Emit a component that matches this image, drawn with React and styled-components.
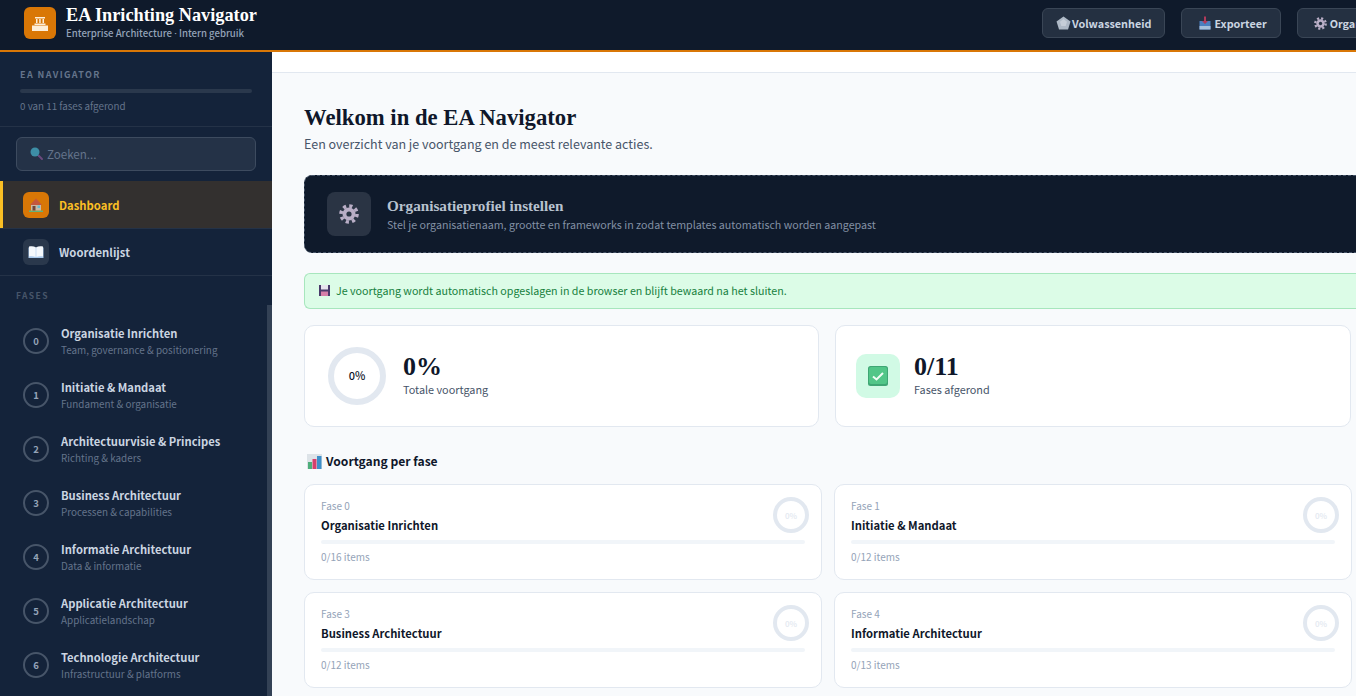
import React from 'react';
import styled, { createGlobalStyle } from 'styled-components';

const GlobalStyle = createGlobalStyle`
  html, body {
    margin: 0;
    height: 100%;
    overflow: hidden;
    background: #f8fafc;
  }
  * {
    box-sizing: border-box;
  }
`;

const SANS = `"Noto Sans CJK SC", "Noto Sans", sans-serif`;
const SERIF = `"Liberation Serif", "DejaVu Serif", serif`;

const Page = styled.div`
  width: 1356px;
  height: 696px;
  overflow: hidden;
  display: flex;
  flex-direction: column;
  font-family: ${SANS};
`;

const Header = styled.header`
  flex: none;
  height: 52px;
  display: flex;
  align-items: center;
  padding: 0 0 4px 24px;
  background: #0f1a2b;
  border-bottom: 2px solid #d97706;
`;

const LogoBox = styled.div`
  width: 32px;
  height: 32px;
  border-radius: 6px;
  background: #d97706;
  display: flex;
  align-items: center;
  justify-content: center;
`;

const Brand = styled.div`
  margin-left: 10px;
  display: flex;
  flex-direction: column;
`;

const BrandTitle = styled.div`
  font-family: ${SERIF};
  font-weight: 700;
  font-size: 18.300px;
  line-height: 20px;
  color: #fff;
`;

const BrandSub = styled.div`
  margin-top: 1px;
  font-size: 9.600px;
  line-height: 14px;
  font-weight: 500;
  color: #94a3b8;
`;

const BrandDot = styled.span`
  font-family: "Noto Sans", sans-serif;
`;

const HeaderActions = styled.div`
  margin-left: auto;
  display: flex;
  gap: 16px;
  margin-right: -49px;
`;

const HeaderButton = styled.button`
  height: 30px;
  padding: 0 13px;
  display: flex;
  align-items: center;
  font-family: ${SANS};
  font-size: 10.800px;
  font-weight: 600;
  color: #cbd5e1;
  background: #243041;
  border: 1px solid #3a4656;
  border-radius: 6px;
`;

const ButtonIcon = styled.span`
  width: ${({ $wide }) => ($wide ? '19px' : '16px')};
  display: flex;
  justify-content: center;
`;

const Body = styled.div`
  flex: 1;
  min-height: 0;
  display: flex;
`;

const Sidebar = styled.aside`
  position: relative;
  flex: none;
  width: 272px;
  background: #14233a;
  display: flex;
  flex-direction: column;
  overflow: hidden;
`;

const ScrollThumb = styled.div`
  position: absolute;
  right: 0;
  top: 253px;
  bottom: 0;
  width: 5px;
  background: #334155;
`;

const SideTop = styled.div`
  padding: 16px 20px 12px;
  border-bottom: 1px solid #243247;
`;

const SideLabel = styled.div`
  font-size: 9px;
  line-height: 13px;
  font-weight: 700;
  letter-spacing: 1.400px;
  color: #64748b;
`;

const SideTrack = styled.div`
  height: 4px;
  margin-top: 8px;
  border-radius: 2px;
  background: #2a384c;
`;

const SideProgress = styled.div`
  margin-top: 6px;
  font-size: 9.800px;
  line-height: 15px;
  color: #64748b;
`;

const SearchWrap = styled.div`
  padding: 10px 16px;
`;

const SearchBox = styled.div`
  height: 34px;
  padding: 0 12px 1px;
  display: flex;
  align-items: center;
  gap: 3px;
  background: #243247;
  border: 1px solid #3d4b5f;
  border-radius: 6px;
  font-size: 11.600px;
  color: #64748b;
`;

const NavItem = styled.div`
  height: ${({ $active }) => ($active ? '48px' : '47px')};
  padding-left: 23px;
  display: flex;
  align-items: center;
  gap: 10px;
  font-size: 11.300px;
  font-weight: 600;
  color: ${({ $active }) => ($active ? '#fbbf24' : '#cbd5e1')};
  background: ${({ $active }) => ($active ? '#33302f' : 'transparent')};
  border-bottom: 1px solid #243247;
  box-shadow: ${({ $active }) => ($active ? 'inset 3px 0 0 #fbbf24' : 'none')};
`;

const NavIcon = styled.div`
  width: 26px;
  height: 26px;
  border-radius: 6px;
  display: flex;
  align-items: center;
  justify-content: center;
  background: ${({ $active }) => ($active ? '#d97706' : '#2a384c')};
`;

const PhaseLabel = styled.div`
  padding: 13px 16px 13px;
  font-size: 8.500px;
  line-height: 12px;
  font-weight: 700;
  letter-spacing: 1.400px;
  color: #475569;
`;

const PhaseRow = styled.div`
  height: 54px;
  padding-left: 23px;
  display: flex;
  align-items: center;
  gap: 12px;
`;

const PhaseDot = styled.div`
  flex: none;
  width: 26px;
  height: 26px;
  border-radius: 50%;
  border: 2px solid #475569;
  display: flex;
  align-items: center;
  justify-content: center;
  font-size: 9.500px;
  font-weight: 600;
  color: #94a3b8;
`;

const PhaseText = styled.div`
  display: flex;
  flex-direction: column;
  margin-top: -1px;
`;

const PhaseName = styled.div`
  font-size: 11.200px;
  line-height: 18px;
  font-weight: 600;
  color: #cbd5e1;
`;

const PhaseSub = styled.div`
  font-size: 9.900px;
  line-height: 16px;
  color: #64748b;
`;

const Main = styled.main`
  flex: 1;
  min-width: 0;
  display: flex;
  flex-direction: column;
  background: #f8fafc;
`;

const TopStrip = styled.div`
  flex: none;
  height: 21px;
  background: #fff;
  border-bottom: 1px solid #e2e8f0;
`;

const Content = styled.div`
  padding: 29px 4px 0 32px;
`;

const Title = styled.h1`
  margin: 0;
  font-family: ${SERIF};
  font-size: 22.700px;
  line-height: 32px;
  font-weight: 700;
  color: #0f172a;
`;

const Lead = styled.p`
  margin: 0;
  font-size: 12.500px;
  line-height: 20px;
  color: #475569;
`;

const ProfileBanner = styled.div`
  height: 78px;
  margin: 21px -4px 0 0;
  padding: 0 22px;
  display: flex;
  align-items: center;
  gap: 16px;
  background: #0f1a2b;
  border: 1px dashed #475569;
  border-right: 0;
  border-radius: 8px 0 0 8px;
`;

const ProfileIcon = styled.div`
  width: 44px;
  height: 44px;
  border-radius: 8px;
  background: #2a3444;
  display: flex;
  align-items: center;
  justify-content: center;
`;

const ProfileTitle = styled.div`
  margin-bottom: 2px;
  font-family: ${SERIF};
  font-size: 15.200px;
  line-height: 19px;
  font-weight: 700;
  color: #b8c2cf;
`;

const ProfileSub = styled.div`
  font-size: 10.700px;
  line-height: 16px;
  color: #8391a5;
`;

const SaveNotice = styled.div`
  height: 36px;
  margin: 20px -4px 0 0;
  padding: 0 13px 2px;
  display: flex;
  align-items: center;
  gap: 5px;
  font-size: 10.700px;
  color: #16803d;
  background: #dcfce7;
  border: 1px solid #a7e6bd;
  border-right: 0;
  border-radius: 6px 0 0 6px;
`;

const StatGrid = styled.div`
  margin-top: 16px;
  display: grid;
  grid-template-columns: 515px 516px;
  gap: 16px;
`;

const StatCard = styled.div`
  height: 102px;
  padding: 0 23px;
  display: flex;
  align-items: center;
  gap: 17px;
  background: #fff;
  border: 1px solid #e2e8f0;
  border-radius: 10px;
`;

const StatRing = styled.div`
  width: 58px;
  height: 58px;
  padding-bottom: 2px;
  border-radius: 50%;
  border: 6px solid #e2e8f0;
  display: flex;
  align-items: center;
  justify-content: center;
  font-size: 11px;
  font-weight: 500;
  color: #0f172a;
`;

const StatIcon = styled.div`
  width: 44px;
  height: 44px;
  margin: 0 -3px;
  border-radius: 10px;
  background: #d1fae5;
  display: flex;
  align-items: center;
  justify-content: center;
`;

const StatText = styled.div`
  display: flex;
  flex-direction: column;
  margin-top: -2px;
`;

const StatValue = styled.div`
  font-family: ${SERIF};
  font-size: 26px;
  line-height: 28px;
  font-weight: 700;
  color: #0f172a;
`;

const StatLabel = styled.div`
  font-size: 10.850px;
  line-height: 16px;
  color: #475569;
`;

const SectionTitle = styled.h2`
  margin: 24px 0 0 3px;
  display: flex;
  align-items: center;
  gap: 4px;
  font-size: 12.100px;
  line-height: 20px;
  font-weight: 600;
  color: #0f172a;
`;

const PhaseGrid = styled.div`
  margin-top: 13px;
  display: grid;
  grid-template-columns: 1fr 1fr;
  gap: 12px;
`;

const PhaseCard = styled.div`
  position: relative;
  height: 96px;
  padding: 14px 16px 0;
  background: #fff;
  border: 1px solid #e2e8f0;
  border-radius: 10px;
`;

const CardFase = styled.div`
  font-size: 10px;
  line-height: 14px;
  color: #94a3b8;
`;

const CardName = styled.div`
  margin-top: 4px;
  font-size: 11.250px;
  line-height: 17px;
  font-weight: 600;
  color: #0f172a;
`;

const CardTrack = styled.div`
  height: 4px;
  margin-top: 6px;
  border-radius: 2px;
  background: #f1f5f9;
`;

const CardCount = styled.div`
  margin-top: 6px;
  font-size: 10px;
  line-height: 14px;
  color: #94a3b8;
`;

const CardRing = styled.div`
  position: absolute;
  top: 12px;
  right: 12px;
  width: 36px;
  height: 36px;
  border-radius: 50%;
  border: 4px solid #e2e8f0;
  display: flex;
  align-items: center;
  justify-content: center;
  font-size: 8px;
  font-weight: 500;
  color: #e2e8f0;
`;

const TempleIcon = () => (
  <svg width="18" height="15" viewBox="0 0 18 15" fill="#fdeed8">
    <path d="M1 9.500h16V15H1z" />
    <path d="M4 1h10v1.500H4zM3.500 7.500h11V9h-11z" />
    <path d="M5 3h1.500v4H5zM8.200 3h1.500v4H8.200zM11.500 3H13v4h-1.500z" />
  </svg>
);

const SearchIcon = () => (
  <svg width="15" height="15" viewBox="0 0 15 15">
    <path d="M9.500 9.500l3.500 3.500" stroke="#6b4a7e" strokeWidth="2" strokeLinecap="round" />
    <circle cx="6" cy="6" r="4.500" fill="#3d8ea6" />
  </svg>
);

const HouseIcon = () => (
  <svg width="16" height="16" viewBox="0 0 16 16">
    <path d="M1 13.500h14V15H1z" fill="#63b27b" />
    <path d="M3 7v6.500h10V7z" fill="#c9b9a6" />
    <path d="M8 1.500L2 8h12z" fill="#c4573d" />
    <path d="M4.500 9h3v4.500h-3z" fill="#70453a" />
    <path d="M9.500 8.500h2.500V11H9.500z" fill="#62bcd6" />
  </svg>
);

const BookIcon = () => (
  <svg width="16" height="14" viewBox="0 0 16 14">
    <path d="M0.500 2.500h15v10.500h-15z" fill="#a9c9ec" />
    <path d="M1 1.500c2.500-.6 5-.4 6.700.7V12c-1.700-.8-4.200-1-6.700-.6zM15 1.500c-2.500-.6-5-.4-6.700.7V12c1.700-.8 4.200-1 6.700-.6z" fill="#f5f8fc" />
  </svg>
);

const GearIcon = ({ size = 20, hole = '#2a3444' }) => (
  <svg width={size} height={size} viewBox="0 0 20 20">
    <circle cx="10" cy="10" r="6.500" fill="#b9aec6" />
    <circle cx="10" cy="10" r="8" fill="none" stroke="#b9aec6" strokeWidth="3.600" strokeDasharray="3.200 3.080" />
    <circle cx="10" cy="10" r="2.600" fill={hole} />
  </svg>
);

const MaturityIcon = () => (
  <svg width="15" height="14" viewBox="0 0 15 14">
    <path d="M7.500 0.500L14.500 5.500 12 13.500H3L0.500 5.500z" fill="#aeb9c6" />
    <path d="M7.500 3L11 5.800 9.700 10H5.300L4 5.800z" fill="#c6ced8" />
  </svg>
);

const ExportIcon = () => (
  <svg width="12" height="14" viewBox="0 0 12 14">
    <path d="M0.500 5h11v8.500H0.500z" fill="#4a7fc0" />
    <path d="M0.500 10h11v3.500H0.500z" fill="#a5bfdc" />
    <path d="M5 0.500h2V5h2L6 8 3 5h2z" fill="#b03a5b" />
  </svg>
);

const SaveIcon = () => (
  <svg width="13" height="13" viewBox="0 0 13 13">
    <path d="M1 1h11v11H1z" fill="#4a3b6b" />
    <path d="M3 1h7v4.500H3z" fill="#e8e4ee" />
    <path d="M3 7.500h7V12H3z" fill="#d67fa8" />
  </svg>
);

const ChartIcon = () => (
  <svg width="15" height="15" viewBox="0 0 15 15">
    <path d="M0 0h15v15H0z" fill="#dde3e8" />
    <path d="M1 8h4v7H1z" fill="#4fae7b" />
    <path d="M5.500 5h4v10h-4z" fill="#d63f6d" />
    <path d="M10 2h4.500v13H10z" fill="#3f8fc9" />
  </svg>
);

const CheckIcon = () => (
  <svg width="20" height="20" viewBox="0 0 20 20">
    <rect width="20" height="20" rx="2.500" fill="#3fa674" />
    <rect x="1" y="1" width="18" height="17" rx="2" fill="#52c688" />
    <path d="M5 10.500l3.500 3L15 7" fill="none" stroke="#f0fdf4" strokeWidth="2" />
  </svg>
);

const phases = [
  ['Organisatie Inrichten', 'Team, governance & positionering'],
  ['Initiatie & Mandaat', 'Fundament & organisatie'],
  ['Architectuurvisie & Principes', 'Richting & kaders'],
  ['Business Architectuur', 'Processen & capabilities'],
  ['Informatie Architectuur', 'Data & informatie'],
  ['Applicatie Architectuur', 'Applicatielandschap'],
  ['Technologie Architectuur', 'Infrastructuur & platforms'],
];

const cards = [
  ['Fase 0', 'Organisatie Inrichten', '0/16 items'],
  ['Fase 1', 'Initiatie & Mandaat', '0/12 items'],
  ['Fase 3', 'Business Architectuur', '0/12 items'],
  ['Fase 4', 'Informatie Architectuur', '0/13 items'],
];

export default function App() {
  return (
    <Page>
      <GlobalStyle />
      <Header>
        <LogoBox>
          <TempleIcon />
        </LogoBox>
        <Brand>
          <BrandTitle>EA Inrichting Navigator</BrandTitle>
          <BrandSub>
            Enterprise Architecture <BrandDot>·</BrandDot> Intern gebruik
          </BrandSub>
        </Brand>
        <HeaderActions>
          <HeaderButton>
            <ButtonIcon>
              <MaturityIcon />
            </ButtonIcon>
            Volwassenheid
          </HeaderButton>
          <HeaderButton>
            <ButtonIcon $wide>
              <ExportIcon />
            </ButtonIcon>
            Exporteer
          </HeaderButton>
          <HeaderButton>
            <ButtonIcon $wide>
              <GearIcon size={13} hole="#243041" />
            </ButtonIcon>
            Organisatie
          </HeaderButton>
        </HeaderActions>
      </Header>
      <Body>
        <Sidebar>
          <SideTop>
            <SideLabel>EA NAVIGATOR</SideLabel>
            <SideTrack />
            <SideProgress>0 van 11 fases afgerond</SideProgress>
          </SideTop>
          <SearchWrap>
            <SearchBox>
              <SearchIcon />
              Zoeken...
            </SearchBox>
          </SearchWrap>
          <NavItem $active>
            <NavIcon $active>
              <HouseIcon />
            </NavIcon>
            Dashboard
          </NavItem>
          <NavItem>
            <NavIcon>
              <BookIcon />
            </NavIcon>
            Woordenlijst
          </NavItem>
          <PhaseLabel>FASES</PhaseLabel>
          {phases.map(([name, sub], i) => (
            <PhaseRow key={name}>
              <PhaseDot>{i}</PhaseDot>
              <PhaseText>
                <PhaseName>{name}</PhaseName>
                <PhaseSub>{sub}</PhaseSub>
              </PhaseText>
            </PhaseRow>
          ))}
          <ScrollThumb />
        </Sidebar>
        <Main>
          <TopStrip />
          <Content>
            <Title>Welkom in de EA Navigator</Title>
            <Lead>Een overzicht van je voortgang en de meest relevante acties.</Lead>
            <ProfileBanner>
              <ProfileIcon>
                <GearIcon />
              </ProfileIcon>
              <div>
                <ProfileTitle>Organisatieprofiel instellen</ProfileTitle>
                <ProfileSub>
                  Stel je organisatienaam, grootte en frameworks in zodat templates automatisch worden aangepast
                </ProfileSub>
              </div>
            </ProfileBanner>
            <SaveNotice>
              <SaveIcon />
              Je voortgang wordt automatisch opgeslagen in de browser en blijft bewaard na het sluiten.
            </SaveNotice>
            <StatGrid>
              <StatCard>
                <StatRing>0%</StatRing>
                <StatText>
                  <StatValue>0%</StatValue>
                  <StatLabel>Totale voortgang</StatLabel>
                </StatText>
              </StatCard>
              <StatCard>
                <StatIcon>
                  <CheckIcon />
                </StatIcon>
                <StatText>
                  <StatValue>0/11</StatValue>
                  <StatLabel>Fases afgerond</StatLabel>
                </StatText>
              </StatCard>
            </StatGrid>
            <SectionTitle>
              <ChartIcon />
              Voortgang per fase
            </SectionTitle>
            <PhaseGrid>
              {cards.map(([fase, name, count]) => (
                <PhaseCard key={fase}>
                  <CardFase>{fase}</CardFase>
                  <CardName>{name}</CardName>
                  <CardTrack />
                  <CardCount>{count}</CardCount>
                  <CardRing>0%</CardRing>
                </PhaseCard>
              ))}
            </PhaseGrid>
          </Content>
        </Main>
      </Body>
    </Page>
  );
}
